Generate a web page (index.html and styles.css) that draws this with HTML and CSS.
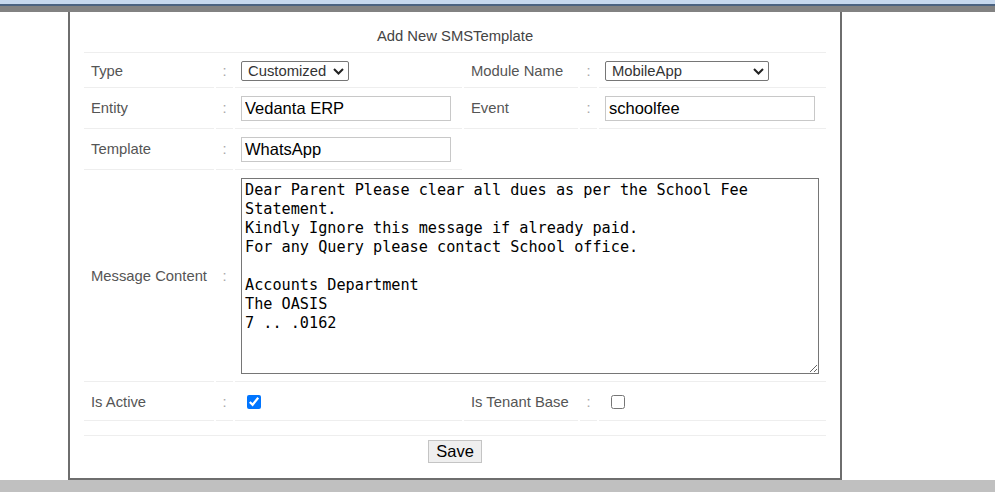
FILE: index.html
```html
<!DOCTYPE html>
<html lang="en">
<head>
    <meta charset="UTF-8">
    <title>Add New SMSTemplate</title>
    <link rel="stylesheet" href="styles.css">
</head>
<body>
    <div class="top-strip"></div>
    <div class="grey-band"></div>
    <div class="page">
        <div class="panel">
            <table class="form-table">
                <colgroup>
                    <col class="col-label">
                    <col class="col-colon">
                    <col class="col-value">
                    <col class="col-label2">
                    <col class="col-colon">
                    <col class="col-value2">
                </colgroup>
                <tr class="title-row">
                    <td colspan="6">Add New SMSTemplate</td>
                </tr>
                <tr class="select-row">
                    <td class="label">Type</td>
                    <td class="colon">:</td>
                    <td class="value">
                        <span class="select-wrap select-type">
                            <select>
                                <option>Customized</option>
                            </select>
                            <svg class="chevron" width="11" height="7" viewBox="0 0 11 7"><path d="M1 1 L5.5 5.5 L10 1" fill="none" stroke="#222" stroke-width="2"/></svg>
                        </span>
                    </td>
                    <td class="label">Module Name</td>
                    <td class="colon">:</td>
                    <td class="value">
                        <span class="select-wrap select-module">
                            <select>
                                <option>MobileApp</option>
                            </select>
                            <svg class="chevron" width="11" height="7" viewBox="0 0 11 7"><path d="M1 1 L5.5 5.5 L10 1" fill="none" stroke="#222" stroke-width="2"/></svg>
                        </span>
                    </td>
                </tr>
                <tr>
                    <td class="label">Entity</td>
                    <td class="colon">:</td>
                    <td class="value"><input type="text" class="text-input" value="Vedanta ERP"></td>
                    <td class="label">Event</td>
                    <td class="colon">:</td>
                    <td class="value"><input type="text" class="text-input" value="schoolfee"></td>
                </tr>
                <tr>
                    <td class="label">Template</td>
                    <td class="colon">:</td>
                    <td class="value"><input type="text" class="text-input" value="WhatsApp"></td>
                    <td colspan="3" class="empty"></td>
                </tr>
                <tr>
                    <td class="label">Message Content</td>
                    <td class="colon">:</td>
                    <td class="value" colspan="4">
                        <textarea class="message">Dear Parent Please clear all dues as per the School Fee Statement.
Kindly Ignore this message if already paid.
For any Query please contact School office.

Accounts Department
The OASIS
7 .. .0162</textarea>
                    </td>
                </tr>
                <tr class="check-row">
                    <td class="label">Is Active</td>
                    <td class="colon">:</td>
                    <td class="value"><input type="checkbox" class="check" checked></td>
                    <td class="label">Is Tenant Base</td>
                    <td class="colon">:</td>
                    <td class="value"><input type="checkbox" class="check"></td>
                </tr>
                <tr class="spacer-row">
                    <td colspan="6"></td>
                </tr>
                <tr class="save-row">
                    <td colspan="6"><button class="save-btn">Save</button></td>
                </tr>
            </table>
        </div>
    </div>
    <div class="bottom-band"></div>
</body>
</html>
```

FILE: styles.css
```css
* {
    box-sizing: border-box;
}

html, body {
    margin: 0;
    padding: 0;
    background-color: #fff;
}

body {
    font-family: "Liberation Sans", Arial, sans-serif;
    font-size: 14.8px;
    color: #555;
    width: 995px;
    height: 492px;
    overflow: hidden;
}

/* browser-ish strips at the top */
.top-strip {
    height: 6px;
    background-color: #c6d8ee;
    border-bottom: 2px solid #4b6381;
}

.grey-band {
    height: 6px;
    background-color: #828282;
}

.page {
    display: flex;
    height: 468px;
}

.panel {
    margin-left: 68px;
    width: 774px;
    height: 468px;
    background-color: #fff;
    border-left: 2px solid #6e6e6e;
    border-right: 2px solid #6e6e6e;
    border-bottom: 2px solid #6e6e6e;
    padding-top: 8px;
}

.form-table {
    margin-left: 12px;
    width: 746px;
    table-layout: fixed;
    border-spacing: 2px;
}

.col-label { width: 130px; }
.col-colon { width: 17px; }
.col-value { width: 227px; }
.col-label2 { width: 114px; }
.col-value2 { width: 227px; }

.form-table td {
    padding: 6px 7px 7px 7px;
    border-bottom: 1px solid #eee;
    line-height: 17px;
    vertical-align: middle;
    white-space: nowrap;
}

.form-table .select-row td,
.form-table .check-row td {
    padding-bottom: 6px;
}

.title-row td {
    text-align: center;
    color: #444;
}

.form-table td.colon {
    padding-left: 0;
    padding-right: 0;
    text-align: center;
    color: #aaa;
}

.form-table td.value {
    padding-left: 6px;
    padding-right: 6px;
}

.form-table td.empty {
    border-bottom: none;
}

.select-wrap {
    position: relative;
    display: block;
    height: 20px;
}

.select-wrap select {
    display: block;
    width: 100%;
    height: 20px;
    font-family: "Liberation Sans", Arial, sans-serif;
    font-size: 14.8px;
    color: #333;
    border: 1px solid #767676;
    border-radius: 2px;
    background-color: #fff;
    padding: 0 2px 0 6px;
    appearance: none;
    -webkit-appearance: none;
}

.chevron {
    position: absolute;
    top: 7px;
    right: 5px;
    pointer-events: none;
}

.select-type {
    width: 108px;
}

.select-module {
    width: 164px;
}

.text-input {
    display: block;
    width: 210px;
    height: 25px;
    padding: 1px 3px;
    font-family: "Liberation Sans", Arial, sans-serif;
    font-size: 16.5px;
    color: #000;
    border: 1px solid #c8c8c8;
    background-color: #fff;
}

.message {
    display: block;
    width: 578px;
    height: 196px;
    margin: 0;
    padding: 2px 3px;
    font-family: "DejaVu Sans Mono", "Liberation Mono", monospace;
    font-size: 15.2px;
    line-height: 19px;
    color: #000;
    border: 1px solid #767676;
    white-space: pre-wrap;
    overflow: hidden;
}

.check {
    display: block;
    width: 14px;
    height: 14px;
    margin: 5px 0 5px 6px;
    accent-color: #0075ff;
}

.spacer-row td {
    padding: 6px 0 6px 0;
}

.save-row td {
    border-bottom: none;
    text-align: center;
    padding: 2px 7px;
}

.save-btn {
    height: 23px;
    padding: 0 7px;
    font-family: "Liberation Sans", Arial, sans-serif;
    font-size: 16.5px;
    color: #000;
    background-color: #efefef;
    border: 1px solid #c4c4c4;
    border-radius: 0;
}

.bottom-band {
    height: 12px;
    background-color: #c0c0c0;
}
```
